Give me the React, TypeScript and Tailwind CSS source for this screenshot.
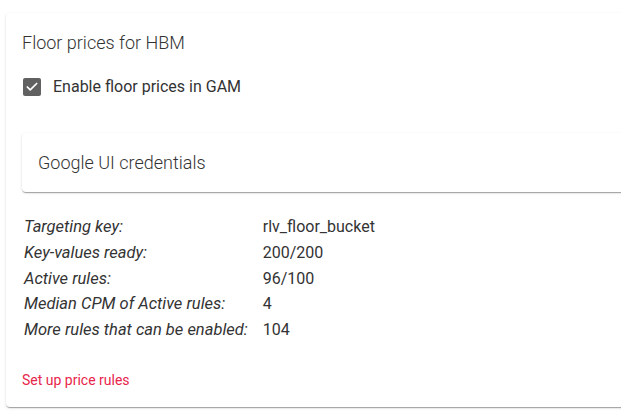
import { Check } from 'lucide-react';

interface Stat {
  label: string;
  value: string;
}

const stats: Stat[] = [
  { label: 'Targeting key:', value: 'rlv_floor_bucket' },
  { label: 'Key-values ready:', value: '200/200' },
  { label: 'Active rules:', value: '96/100' },
  { label: 'Median CPM of Active rules:', value: '4' },
  { label: 'More rules that can be enabled:', value: '104' },
];

const App = () => {
  return (
    <div
      className="w-[621px] h-[417px] overflow-hidden bg-white pl-[6px] pt-[13px]"
      style={{ fontFamily: 'Roboto, "Liberation Sans", sans-serif' }}
    >
      {/* Floor prices card */}
      <div className="w-[700px] h-[394px] rounded-[4px] bg-white px-4 pt-4 shadow-[0_2px_1px_-1px_rgba(0,0,0,0.2),0_1px_1px_0_rgba(0,0,0,0.14),0_1px_3px_0_rgba(0,0,0,0.12)]">
        <h2 className="text-[18px] font-light leading-[28px] text-[#333]">
          Floor prices for HBM
        </h2>

        <label className="mt-[18px] flex items-center gap-3 pl-[1px]">
          <span className="flex h-[18px] w-[18px] items-center justify-center rounded-[2px] bg-[#616161]">
            <Check size={14} strokeWidth={3} className="text-white" />
          </span>
          <span className="text-[16px] leading-6 text-[#333]">
            Enable floor prices in GAM
          </span>
        </label>

        {/* Credentials panel */}
        <div className="mt-[34px] h-[59px] rounded-[4px] bg-white px-4 pt-[18px] shadow-[0_2px_1px_-1px_rgba(0,0,0,0.2),0_1px_1px_0_rgba(0,0,0,0.14),0_1px_3px_0_rgba(0,0,0,0.12)]">
          <span className="text-[18px] font-light leading-6 text-[#333]">
            Google UI credentials
          </span>
        </div>

        {/* Stats */}
        <div className="mt-[22px] grid grid-cols-[auto_1fr] gap-x-[15px] pl-[2px] leading-[25.8px] text-[#333]">
          {stats.map((stat) => (
            <div key={stat.label} className="contents">
              <span className="text-[16.5px] italic">{stat.label}</span>
              <span className="text-[16px]">{stat.value}</span>
            </div>
          ))}
        </div>

        <a href="#rules" className="mt-[27px] block text-[14px] leading-5 text-[#e8254a]">
          Set up price rules
        </a>
      </div>
    </div>
  );
};

export default App;
